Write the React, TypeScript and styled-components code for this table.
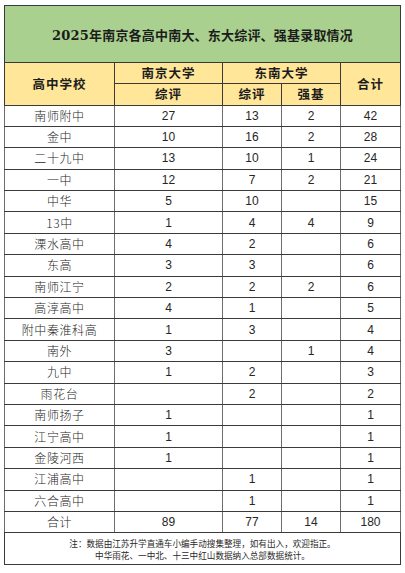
import React from 'react';
import styled, {createGlobalStyle} from 'styled-components';

const GlobalStyle = createGlobalStyle`
    html, body {
        margin: 0;
        padding: 0;
        background: #ffffff;
    }
    body {
        font-family: "Liberation Sans", "Noto Sans CJK SC", sans-serif;
        color: #1f1f1f;
    }
`;

const Page = styled.div`
    padding: 5px 5px 0 4px;
`;

const Table = styled.table`
    width: 396px;
    border-collapse: collapse;
    table-layout: fixed;
    border: 1px solid #3a3a3a;
`;

const TitleCell = styled.td`
    height: 56px;
    background: #a9d08e;
    text-align: center;
    font-family: "DejaVu Serif", "Noto Sans CJK SC", serif;
    font-weight: 700;
    font-size: 13px;
    letter-spacing: 0.2px;
    color: #1c1c1c;
    border: 1px solid #3a3a3a;
    padding: 0;
`;

const HeadCell = styled.td<{ $h?: number }>`
    height: ${p => p.$h ?? 20}px;
    background: #ffe699;
    text-align: center;
    font-family: "Noto Sans CJK SC", sans-serif;
    font-weight: 700;
    font-size: 12.5px;
    letter-spacing: 1px;
    color: #1c1c1c;
    border: 1px solid #3a3a3a;
    padding: 0;
    line-height: 1;
`;

const Cell = styled.td<{ $name?: boolean }>`
    height: 20.4px;
    text-align: center;
    font-family: ${p => p.$name ? '"Noto Sans CJK SC", sans-serif' : '"Liberation Sans", sans-serif'};
    font-size: 12px;
    font-weight: ${p => p.$name ? 300 : 400};
    letter-spacing: ${p => p.$name ? '0.6px' : '0'};
    color: #262626;
    border-top: 1px solid #3a3a3a;
    border-bottom: 1px solid #3a3a3a;
    border-left: 1px solid #6e6e6e;
    border-right: 1px solid #6e6e6e;
    padding: 0;
    line-height: 1;
`;

const NoteCell = styled.td`
    height: 29px;
    text-align: center;
    font-family: "Noto Sans CJK SC", sans-serif;
    font-size: 8.6px;
    line-height: 12px;
    color: #2a2a2a;
    border: 1px solid #3a3a3a;
    padding: 1px 0 1px;
`;

type Row = [string, number | null, number | null, number | null, number];

const rows: Row[] = [
    ['南师附中', 27, 13, 2, 42],
    ['金中', 10, 16, 2, 28],
    ['二十九中', 13, 10, 1, 24],
    ['一中', 12, 7, 2, 21],
    ['中华', 5, 10, null, 15],
    ['13中', 1, 4, 4, 9],
    ['溧水高中', 4, 2, null, 6],
    ['东高', 3, 3, null, 6],
    ['南师江宁', 2, 2, 2, 6],
    ['高淳高中', 4, 1, null, 5],
    ['附中秦淮科高', 1, 3, null, 4],
    ['南外', 3, null, 1, 4],
    ['九中', 1, 2, null, 3],
    ['雨花台', null, 2, null, 2],
    ['南师扬子', 1, null, null, 1],
    ['江宁高中', 1, null, null, 1],
    ['金陵河西', 1, null, null, 1],
    ['江浦高中', null, 1, null, 1],
    ['六合高中', null, 1, null, 1],
];

const App = () => {
    return (
        <Page>
            <GlobalStyle/>
            <Table>
                <colgroup>
                    <col style={{width: 110}}/>
                    <col style={{width: 108}}/>
                    <col style={{width: 59}}/>
                    <col style={{width: 59}}/>
                    <col style={{width: 60}}/>
                </colgroup>
                <tbody>
                <tr>
                    <TitleCell colSpan={5}>2025年南京各高中南大、东大综评、强基录取情况</TitleCell>
                </tr>
                <tr>
                    <HeadCell rowSpan={2}>高中学校</HeadCell>
                    <HeadCell>南京大学</HeadCell>
                    <HeadCell colSpan={2}>东南大学</HeadCell>
                    <HeadCell rowSpan={2}>合计</HeadCell>
                </tr>
                <tr>
                    <HeadCell $h={20.5}>综评</HeadCell>
                    <HeadCell $h={20.5}>综评</HeadCell>
                    <HeadCell $h={20.5}>强基</HeadCell>
                </tr>
                {rows.map(([name, a, b, c, total]) => (
                    <tr key={name}>
                        <Cell $name>{name}</Cell>
                        <Cell>{a ?? ''}</Cell>
                        <Cell>{b ?? ''}</Cell>
                        <Cell>{c ?? ''}</Cell>
                        <Cell>{total}</Cell>
                    </tr>
                ))}
                <tr>
                    <Cell $name>合计</Cell>
                    <Cell>89</Cell>
                    <Cell>77</Cell>
                    <Cell>14</Cell>
                    <Cell>180</Cell>
                </tr>
                <tr>
                    <NoteCell colSpan={5}>
                        注：数据由江苏升学直通车小编手动搜集整理，如有出入，欢迎指正。<br/>
                        中华雨花、一中北、十三中红山数据纳入总部数据统计。
                    </NoteCell>
                </tr>
                </tbody>
            </Table>
        </Page>
    );
};

export default App;
